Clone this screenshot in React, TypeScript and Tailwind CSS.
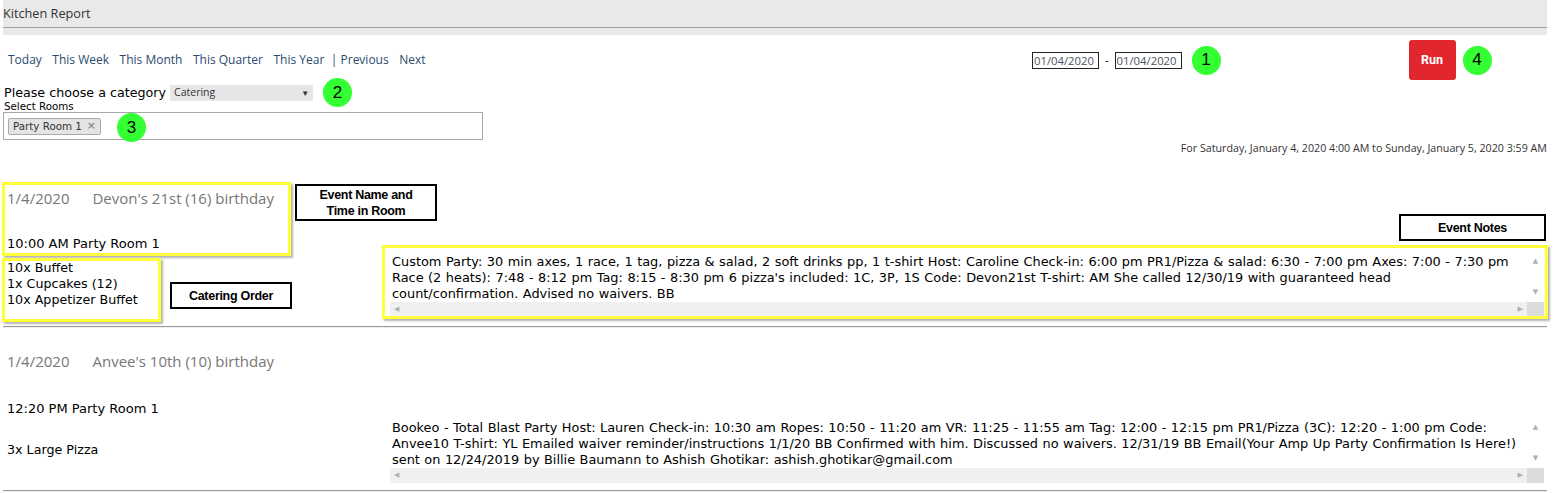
import React from 'react';

const navLinks = ['Today', 'This Week', 'This Month', 'This Quarter', 'This Year', '| Previous', 'Next'];

interface EventData {
  date: string;
  name: string;
  time: string;
  catering: string[];
  notes: string[];
}

const events: EventData[] = [
  {
    date: '1/4/2020',
    name: "Devon's 21st (16) birthday",
    time: '10:00 AM Party Room 1',
    catering: ['10x Buffet', '1x Cupcakes (12)', '10x Appetizer Buffet'],
    notes: [
      'Custom Party: 30 min axes, 1 race, 1 tag, pizza & salad, 2 soft drinks pp, 1 t-shirt Host: Caroline Check-in: 6:00 pm PR1/Pizza & salad: 6:30 - 7:00 pm Axes: 7:00 - 7:30 pm',
      "Race (2 heats): 7:48 - 8:12 pm Tag: 8:15 - 8:30 pm 6 pizza's included: 1C, 3P, 1S Code: Devon21st T-shirt: AM She called 12/30/19 with guaranteed head",
      'count/confirmation. Advised no waivers. BB',
    ],
  },
  {
    date: '1/4/2020',
    name: "Anvee's 10th (10) birthday",
    time: '12:20 PM Party Room 1',
    catering: ['3x Large Pizza'],
    notes: [
      'Bookeo - Total Blast Party Host: Lauren Check-in: 10:30 am Ropes: 10:50 - 11:20 am VR: 11:25 - 11:55 am Tag: 12:00 - 12:15 pm PR1/Pizza (3C): 12:20 - 1:00 pm Code:',
      'Anvee10 T-shirt: YL Emailed waiver reminder/instructions 1/1/20 BB Confirmed with him. Discussed no waivers. 12/31/19 BB Email(Your Amp Up Party Confirmation Is Here!)',
      'sent on 12/24/2019 by Billie Baumann to Ashish Ghotikar: ashish.ghotikar@gmail.com',
    ],
  },
];

const Badge: React.FC<{ n: number; className?: string }> = ({ n, className = '' }) => (
  <div
    className={`w-[29px] h-[29px] rounded-full bg-[#33ff33] flex items-center justify-center text-[17px] text-black font-['Liberation_Sans',sans-serif] shrink-0 ${className}`}
  >
    {n}
  </div>
);

const NotesBox: React.FC<{ lines: string[] }> = ({ lines }) => (
  <div className="relative w-[1154px] h-[66px] bg-white">
    <div className="pt-[3px] pl-[2px] pr-[18px] leading-[16px] text-[12.9px] [word-spacing:0.4px] text-black">
      {lines.map((l, i) => (
        <div key={i} className="whitespace-pre overflow-hidden">
          {l}
        </div>
      ))}
    </div>
    {/* vertical scrollbar */}
    <div className="absolute right-0 top-0 w-[17px] h-[51px] flex flex-col items-center justify-between py-[6px] text-[7px] leading-[8px] text-[#b0b0b0]">
      <span>▲</span>
      <span>▼</span>
    </div>
    {/* horizontal scrollbar */}
    <div className="absolute left-0 bottom-0 w-full h-[15px] flex">
      <div className="flex-1 bg-[#f0f0f0] flex items-center justify-between px-[4px] text-[7px] text-[#b0b0b0]">
        <span>◀</span>
        <span>▶</span>
      </div>
      <div className="w-[17px] bg-[#dcdcdc]" />
    </div>
  </div>
);

const Hr: React.FC<{ className?: string }> = ({ className = '' }) => (
  <div className={`h-[2px] border-t border-[#9a9a9a] border-b border-b-[#eeeeee] ${className}`} />
);

const EventBlock: React.FC<{ ev: EventData; first: boolean }> = ({ ev, first }) => (
  <div>
    <div className={`flex pl-[4px] leading-[20px] text-[15px] text-[#777] font-['Open_Sans',sans-serif] ${first ? 'mt-[34px]' : 'mt-[23px]'}`}>
      <span>{ev.date}</span>
      <span className="ml-[23px]">{ev.name}</span>
    </div>
    <div className={`pl-[4px] leading-[14px] text-[13px] ${first ? 'mt-[29px]' : 'mt-[31px]'}`}>{ev.time}</div>
    <div className={`flex items-center h-[66px] ${first ? '' : 'mt-[1px]'}`}>
      <div className="w-[387px] pl-[4px] leading-[16px]">
        {ev.catering.map((c, i) => (
          <div key={i}>{c}</div>
        ))}
      </div>
      <NotesBox lines={ev.notes} />
    </div>
    <Hr className={first ? 'mt-[9px]' : 'mt-[7px]'} />
  </div>
);

const YellowBox: React.FC<{ className: string }> = ({ className }) => (
  <div className={`absolute border-[3px] border-[#ffff3a] shadow-[2px_2px_2px_rgba(0,0,0,0.3)] pointer-events-none ${className}`} />
);

const Label: React.FC<{ className: string; children: React.ReactNode }> = ({ className, children }) => (
  <div
    className={`absolute border-[2.5px] border-black bg-white flex items-center justify-center text-center font-bold text-[12.5px] leading-[16px] tracking-[-0.3px] text-black font-['Liberation_Sans',sans-serif] ${className}`}
  >
    {children}
  </div>
);

export default function App() {
  return (
    <div className="relative w-[1562px] h-[493px] overflow-hidden bg-white text-[12.7px] text-black font-['DejaVu_Sans',Verdana,sans-serif]">
      <div className="ml-[3px] w-[1544px]">
        {/* header */}
        <div className="bg-[#e9e9e9] h-[35px]">
          <div className="h-[28px] border-b border-[#9c9c9c] leading-[26px] text-[12.7px] text-[#333] font-['Open_Sans',sans-serif]">
            Kitchen Report
          </div>
        </div>

        {/* nav row */}
        <div className="mt-[5px] h-[40px] flex items-center">
          <div className="w-[1029px] flex items-center pl-[5px] gap-[10.5px] text-[12px] text-[#2a4b6f] font-['Open_Sans',sans-serif]">
            {navLinks.map((l) => (
              <span key={l} className={l.startsWith('|') ? '-ml-[4px]' : ''}>
                {l}
              </span>
            ))}
          </div>
          <div className="w-[67px] h-[17px] border border-[#222] text-[11.3px] leading-[15px] pl-[1px] text-[#4d5360] font-['Open_Sans',sans-serif]">
            01/04/2020
          </div>
          <span className="mx-[6px] text-[11px] font-['Open_Sans',sans-serif]">-</span>
          <div className="w-[67px] h-[17px] border border-[#222] text-[11.3px] leading-[15px] pl-[1px] text-[#4d5360] font-['Open_Sans',sans-serif]">
            01/04/2020
          </div>
          <Badge n={1} className="ml-[10px]" />
          <button className="ml-[188px] w-[47px] h-[40px] bg-[#e1262d] rounded-[3px] text-white font-bold text-[12.5px] font-['Roboto',sans-serif]">
            Run
          </button>
          <Badge n={4} className="ml-[7px]" />
        </div>

        {/* category row */}
        <div className="mt-[4px] h-[17px] flex items-center">
          <span className="ml-[1px]">Please choose a category</span>
          <div className="ml-[4px] w-[143px] h-[16px] bg-[#e6e6e6] flex items-center justify-between pl-[4px] pr-[4px] text-[10.5px] text-[#333] font-['Open_Sans',sans-serif]">
            <span>Catering</span>
            <span className="text-[8px]">▼</span>
          </div>
          <Badge n={2} className="ml-[10px]" />
        </div>
        <div className="ml-[1px] text-[10.3px] leading-[11px]">Select Rooms</div>
        <div className="w-[480px] h-[28px] border border-[#a9a9a9] pl-[4px] pt-[3px]">
          <div className="inline-flex items-center h-[17px] border border-[#aaaaaa] bg-[#e4e4e4] rounded-[2px] px-[4px] text-[10.3px] text-[#333]">
            <span>Party Room 1</span>
            <span className="ml-[5px] text-[#777] text-[11px]">×</span>
          </div>
        </div>
        <div className="mt-[2px] text-right leading-[12px] text-[10.7px] text-[#333] font-['Open_Sans',sans-serif]">
          For Saturday, January 4, 2020 4:00 AM to Sunday, January 5, 2020 3:59 AM
        </div>

        {events.map((ev, i) => (
          <EventBlock key={i} ev={ev} first={i === 0} />
        ))}
      </div>

      {/* annotation overlays */}
      <Badge n={3} className="absolute left-[117px] top-[113px]" />
      <YellowBox className="left-[2px] top-[182px] w-[289px] h-[74px]" />
      <YellowBox className="left-[2px] top-[258px] w-[159px] h-[64px]" />
      <YellowBox className="left-[382px] top-[245px] w-[1166px] h-[74px]" />
      <Label className="left-[295px] top-[184px] w-[142px] h-[37px]">
        Event Name and
        <br />
        Time in Room
      </Label>
      <Label className="left-[170px] top-[282px] w-[122px] h-[27px]">Catering Order</Label>
      <Label className="left-[1399px] top-[214px] w-[147px] h-[27px]">Event Notes</Label>
    </div>
  );
}
